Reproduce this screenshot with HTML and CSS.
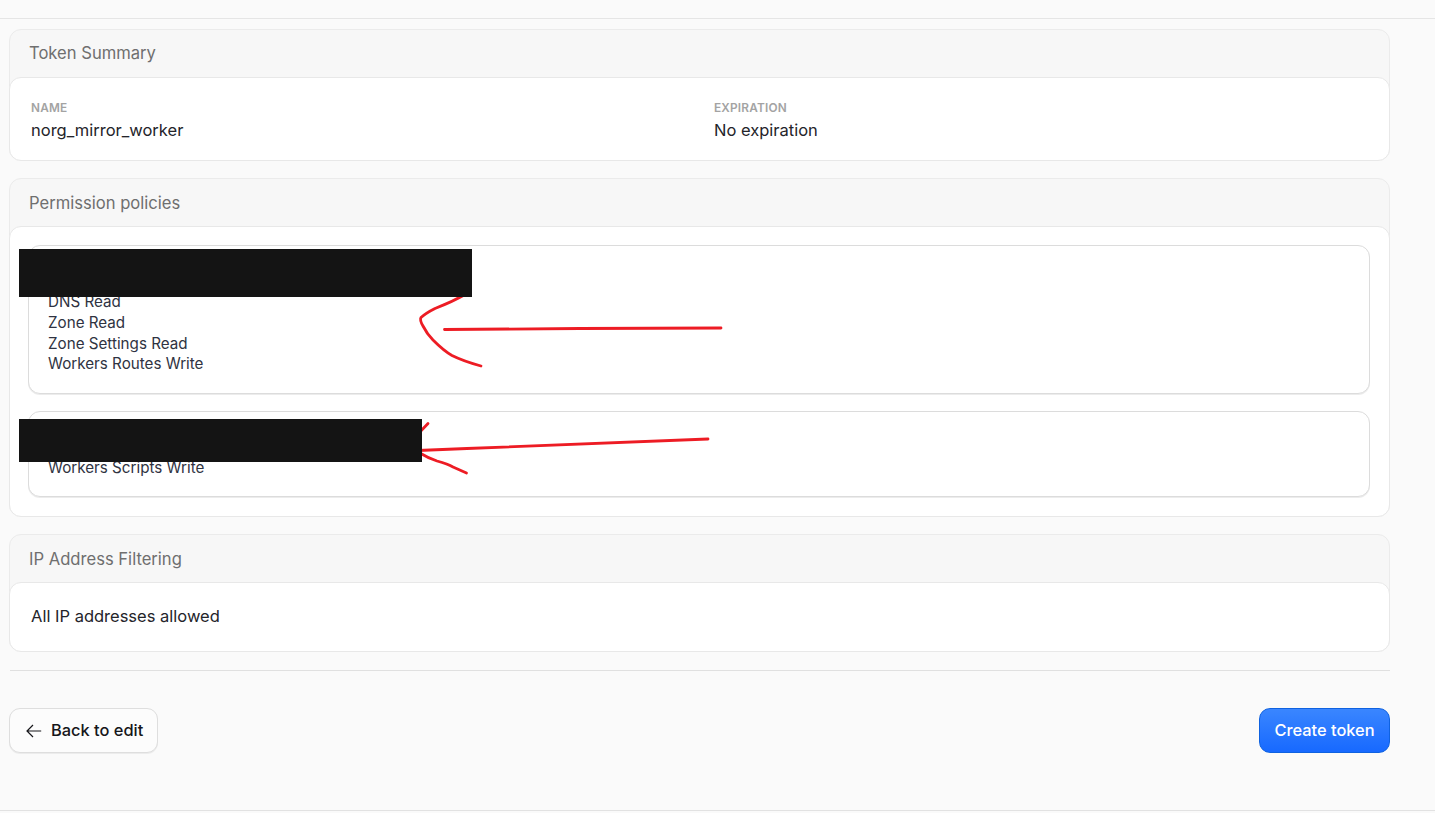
FILE: index.html
```html
<!DOCTYPE html>
<html lang="en">
<head>
<meta charset="utf-8">
<title>Token Summary</title>
<link rel="stylesheet" href="styles.css">
</head>
<body>
<div class="page">
  <div class="topbar"></div>
  <main class="main">
    <section class="card">
      <h2 class="card-title">Token Summary</h2>
      <div class="card-body summary">
        <div>
          <div class="label">NAME</div>
          <div class="value">norg_mirror_worker</div>
        </div>
        <div>
          <div class="label">EXPIRATION</div>
          <div class="value">No expiration</div>
        </div>
      </div>
    </section>
    <section class="card">
      <h2 class="card-title card-title-low">Permission policies</h2>
      <div class="card-body policies">
        <div class="policy policy-a">
          <div class="perm">DNS Read</div>
          <div class="perm">Zone Read</div>
          <div class="perm">Zone Settings Read</div>
          <div class="perm">Workers Routes Write</div>
        </div>
        <div class="policy policy-b">
          <div class="perm">Workers Scripts Write</div>
        </div>
      </div>
    </section>
    <section class="card">
      <h2 class="card-title card-title-mid">IP Address Filtering</h2>
      <div class="card-body ip"><div class="value">All IP addresses allowed</div></div>
    </section>
    <hr class="divider">
    <div class="actions">
      <button class="btn btn-back" type="button">
        <svg class="arrow" width="16" height="16" viewBox="0 0 16 16" fill="none" stroke="currentColor" stroke-width="1.2"><path d="M15.2 8H1M7 2L1 8l6 6"/></svg>
        Back to edit
      </button>
      <button class="btn btn-create" type="button">Create token</button>
    </div>
  </main>
  <div class="bottomline"></div>
  <svg class="scribble" width="1435" height="813" viewBox="0 0 1435 813" fill="none" stroke="#ed1c24" stroke-width="2.8" stroke-linecap="round" stroke-linejoin="round">
    <path d="M444.500 329.500L580 328.500L721 328"/>
    <path d="M466 294Q452 302 435 308.500Q426 313 421 317.500Q419.500 320 423 326Q427 334 433 340Q444 351 452 355.500Q463 361 481 366"/>
    <path d="M418 450.500L467 448.500L708 439"/>
    <path d="M418 434L428 423.500"/>
    <path d="M418 452Q428 458 437 461Q448 464 453 467L466.500 473"/>
  </svg>
  <div class="redact redact-a"></div>
  <div class="redact redact-b"></div>
</div>
</body>
</html>
```
FILE: styles.css
```css
* { box-sizing: border-box; }
html, body { margin: 0; padding: 0; }
body {
  background: #fafafa;
  font-family: Inter, "Liberation Sans", sans-serif;
  color: #1f1f24;
}
.page { position: relative; width: 1435px; height: 813px; overflow: hidden; display: flex; flex-direction: column; }
.topbar { height: 19px; border-bottom: 1px solid #e5e5e5; flex: none; }
.main { flex: 1; padding: 10px 45px 0 9px; }
.card {
  background: #f7f7f7;
  border: 1px solid #ebebeb;
  border-radius: 12px;
  margin-bottom: 17px;
}
.card-title {
  margin: 0;
  height: 47px;
  padding: 0 19px;
  font-size: 16.600px;
  font-weight: 400;
  line-height: 47px;
  color: #6f6f6f;
}
.card-title-mid { line-height: 48px; }
.card-title-low { line-height: 49px; }
.card-body {
  margin: 0 -1px -1px;
  background: #fff;
  border: 1px solid #e8e8e8;
  border-radius: 12px;
}
.summary {
  height: 84px;
  padding: 23px 21px 0;
  display: grid;
  grid-template-columns: 654px 1fr;
  gap: 29px;
}
.label { font-size: 11.800px; font-weight: 600; letter-spacing: 0.2px; line-height: 14px; color: #a3a3a3; }
.value { font-size: 16.500px; line-height: 24px; color: #24242a; margin-top: 3px; }
.policies { height: 291px; padding: 18px 19px 0 18px; display: flex; flex-direction: column; gap: 17px; }
.policy { border: 1px solid #dcdcdc; border-radius: 12px; padding: 0 19px; background: #fff; box-shadow: 0 1px 0 #ececec; }
.policy-a { height: 149px; padding-top: 46.200px; }
.policy-b { height: 86px; padding-top: 46px; }
.perm { font-size: 15.200px; line-height: 20.700px; color: #2f3342; }
.ip { height: 70px; padding: 18px 21px 0; }
.divider { border: 0; border-top: 1px solid #e0e0e0; margin: 18px 0 37px 1px; }
.actions { display: flex; justify-content: space-between; }
.btn {
  height: 45px;
  border-radius: 11px;
  font-family: inherit;
  font-size: 16.400px;
  font-weight: 450;
  line-height: 20px;
  display: inline-flex;
  align-items: center;
  padding: 0 0 2px;
}
.btn-back { width: 149px; background: #fcfcfc; border: 1px solid #dedede; color: #16161a; padding-left: 16px; gap: 9px; box-shadow: 0 1px 0 #ececec; }
.arrow { flex: none; margin-top: 2px; }
.btn-create {
  width: 131px;
  justify-content: center;
  color: #fff;
  font-weight: 500;
  border: 1px solid #0f62e0;
  background: linear-gradient(#3a86ff, #1769ff);
}
.bottomline { height: 3px; border-top: 1px solid #e2e2e2; flex: none; }
.scribble { position: absolute; left: 0; top: 0; pointer-events: none; }
.redact { position: absolute; left: 19px; background: #141414; }
.redact-a { top: 249px; width: 453px; height: 48px; }
.redact-b { top: 419px; width: 403px; height: 43px; }
```
